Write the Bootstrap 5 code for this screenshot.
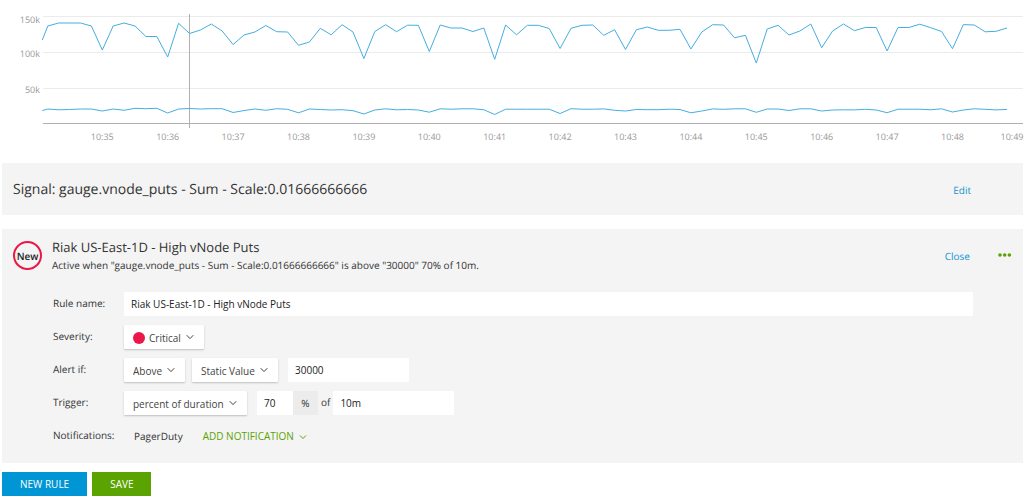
<!DOCTYPE html>
<html lang="en">
<head>
<meta charset="utf-8">
<meta name="viewport" content="width=device-width, initial-scale=1">
<title>Alert rule</title>
<link href="https://cdn.jsdelivr.net/npm/bootstrap@5.3.0/dist/css/bootstrap.min.css" rel="stylesheet">
<style>
  body { font-family: "Open Sans", "Noto Sans", sans-serif; font-size: 10px; line-height: 16px; color: #333; background: #fff; text-rendering: geometricPrecision; }
  .chart text { font-size: 9px; fill: #999; }
  .chart .grid-line { stroke: #ebebeb; }
  .chart .axis-line { stroke: #b0b0b0; }
  .chart .series { fill: none; stroke: #45aee0; stroke-width: 1; stroke-linejoin: round; }
  .page-body { padding: 0 1px 0 2px; }
  .panel { background: #f4f4f4; }
  .signal-panel { padding: 17px 52px 15px 11px; }
  .signal-title { font-size: 14px; line-height: 20px; }
  .rule-panel { margin-top: 14px; padding: 9px 11px 15px 11px; }
  .rule-title { font-size: 13px; line-height: 19px; }
  .state-circle { width: 29px; height: 29px; margin-right: 10px; border: 2px solid #eb1748; border-radius: 50%; font-weight: 600; color: #222; }
  .rule-form { padding: 19px 39px 0 40px; }
  .form-line { display: flex; align-items: center; min-height: 24px; margin-bottom: 9px; }
  .line-label { width: 71px; flex: none; padding-bottom: 2px; }
  .field { height: 24px; padding: 0 7px; border: 0; border-radius: 1px; background: #fff; color: #222; font-size: 10px; line-height: 16px; }
  .w-value { width: 121px; }
  .w-percent { width: 36px; }
  .gap-field { margin-left: 10px; }
  .gap-picker { margin-left: 7px; }
  .unit { height: 24px; width: 25px; background: #ececec; }
  .unit-join { padding: 0 3px 2px; }
  .picker { height: 24px; background: #fff; border-radius: 1px; box-shadow: 0 1px 2px rgba(0,0,0,.22); color: #444; }
  .picker select { appearance: none; width: 100%; height: 100%; border: 0; padding: 2px 20px 0 9px; color: inherit; font-size: 10px;
    background: url("data:image/svg+xml,%3Csvg xmlns='http://www.w3.org/2000/svg' width='8' height='6'%3E%3Cpath d='M.7 1.2L4 4.6 7.3 1.2' fill='none' stroke='%23444'/%3E%3C/svg%3E") no-repeat right 10px center; }
  .picker .dot { flex: none; width: 12px; height: 12px; margin: 2px 0 0 9px; border-radius: 50%; background: #eb1748; }
  .picker .dot + select { padding-left: 4px; }
  .w-severity { width: 80px; }
  .w-compare { width: 61px; }
  .w-kind { width: 86px; }
  .w-trigger { width: 123px; }
  .action { color: #1493cf; text-decoration: none; }
  .notify-name { padding: 0 20px 0 10px; }
  .add-btn { border: 0; padding: 0; background: none; color: #5ba300; }
  .add-btn svg { margin-left: 2px; }
  .menu-btn { border: 0; padding: 0; background: none; line-height: 0; margin-left: 26px; }
  .main-actions { margin-top: 9px; gap: 5px; }
  .main-btn { border: 0; height: 24px; padding: 0 18px; color: #fff; }
  .btn-blue { background: #0096d6; }
  .btn-green { background: #5ba300; }
</style>
</head>
<body>
<svg class="chart d-block w-100" viewBox="0 0 1024 163" role="img" aria-label="vnode puts over time">
  <g class="grid-line"><path d="M43 16.5H1023M43 52.5H1023M43 88.5H1023"/></g>
  <g text-anchor="end"><text x="40" y="23">150k</text><text x="40" y="57">100k</text><text x="40" y="93">50k</text></g>
  <g class="axis-line"><path d="M43 123.5H1023"/><path d="M189.5 14V128"/></g>
  <polyline class="series" id="upper"/>
  <polyline class="series" id="lower"/>
  <g id="times" text-anchor="middle"></g>
</svg>
<main class="page-body">
  <section class="panel signal-panel d-flex align-items-center justify-content-between">
    <h1 class="signal-title fw-normal m-0">Signal: gauge.vnode_puts - Sum - Scale:0.01666666666</h1>
    <a class="action" href="#">Edit</a>
  </section>
  <section class="panel rule-panel">
    <header class="d-flex align-items-center">
      <div class="state-circle d-flex align-items-center justify-content-center flex-shrink-0">New</div>
      <div class="flex-grow-1">
        <h2 class="rule-title fw-normal m-0">Riak US-East-1D - High vNode Puts</h2>
        <p class="m-0">Active when "gauge.vnode_puts - Sum - Scale:0.01666666666" is above "30000" 70% of 10m.</p>
      </div>
      <a class="action" href="#">Close</a>
      <button class="menu-btn" type="button" aria-label="More">
        <svg width="16" height="8" fill="#5ba300"><circle cx="4" cy="3" r="1.8"/><circle cx="8.7" cy="3" r="1.8"/><circle cx="13.4" cy="3" r="1.8"/></svg>
      </button>
    </header>
    <form class="rule-form">
      <div class="form-line">
        <label class="line-label" for="name">Rule name:</label>
        <input class="field flex-grow-1" id="name" type="text" value="Riak US-East-1D - High vNode Puts">
      </div>
      <div class="form-line">
        <label class="line-label" for="severity">Severity:</label>
        <div class="picker w-severity d-flex align-items-center"><span class="dot"></span>
          <select id="severity"><option>Critical</option><option>Major</option><option>Minor</option></select></div>
      </div>
      <div class="form-line">
        <label class="line-label" for="compare">Alert if:</label>
        <div class="picker w-compare"><select id="compare"><option>Above</option><option>Below</option></select></div>
        <div class="picker w-kind gap-picker"><select aria-label="Threshold type"><option>Static Value</option></select></div>
        <input class="field w-value gap-field" type="text" value="30000" aria-label="Threshold">
      </div>
      <div class="form-line">
        <label class="line-label" for="trigger">Trigger:</label>
        <div class="picker w-trigger"><select id="trigger"><option>percent of duration</option></select></div>
        <input class="field w-percent gap-field" type="text" value="70" aria-label="Percent">
        <span class="unit d-flex align-items-center justify-content-center">%</span>
        <label class="unit-join" for="duration">of</label>
        <input class="field w-value" id="duration" type="text" value="10m">
      </div>
      <div class="form-line mb-0">
        <span class="line-label">Notifications:</span>
        <span class="notify-name">PagerDuty</span>
        <button class="add-btn" type="button">ADD NOTIFICATION
          <svg width="8" height="6" fill="none" stroke="#5ba300"><path d="M1 1.5L4 4.5 7 1.5"/></svg></button>
      </div>
    </form>
  </section>
  <div class="main-actions d-flex">
    <button class="main-btn btn-blue" type="button">NEW RULE</button>
    <button class="main-btn btn-green" type="button">SAVE</button>
  </div>
</main>
<script>
  // One sample every ten seconds, as heights in the chart's own units.
  const upper = [26,23,23,23,26,50,26,23,26,36.5,36.5,57,23.3,33.5,30,24,31,44.5,35,32,25.5,31.7,32,45.3,42,28.3,34.8,24.7,32,58.5,31.5,24.7,31.7,25.2,25.3,51.5,25,28,28,31.5,28,59.3,25,34.8,25.3,25.3,28.5,48.5,28.3,25.3,25,35.3,29.7,49.5,29.7,27,30.3,30.3,29.3,49,32,24.7,25,37.8,35.3,63,29,25.3,35,31,24,47.7,31,24,30.7,27.5,27.5,51,27.5,27.5,24.2,27.7,31.5,48.7,24.6,25,31.8,31.3,28];
  const lower = [109,109.8,109.5,109,109,111,109,110.3,108.3,108.7,108.3,113,109,108.5,109,108.7,108.7,112.5,110.5,109,110.3,108.7,109.3,112.8,109,109.5,110,109.7,110.7,114,110,108.8,109.8,109.5,110,112.2,108.8,109.2,108.8,108.8,109.7,114.5,109.2,109.2,109.2,109.2,109.2,113.5,108.7,109.2,109.2,108.9,110.3,111,109.5,109.7,109.7,109.2,109.5,112.8,111,108.9,109.3,108.8,108.8,112.3,109,109,110.5,108.8,108.8,111,110,109.8,109.9,109.3,110,112.7,109.2,109.2,109.2,109.8,108.8,112,110,108.8,109.3,109.9,109.4];
  const at = i => 47.8 + i * 10.9;
  const draw = (id, first, ys) => document.getElementById(id).setAttribute("points",
    "42.3," + first + " " + ys.map((y, i) => at(i).toFixed(1) + "," + y).join(" "));
  draw("upper", 40, upper);
  draw("lower", 110.6, lower);
  const times = document.getElementById("times");
  for (let m = 35; m <= 49; m++) {
    const t = document.createElementNS("http://www.w3.org/2000/svg", "text");
    t.setAttribute("x", Math.min(at(5 + (m - 35) * 6), 1012));
    t.setAttribute("y", 140);
    t.textContent = "10:" + m;
    times.append(t);
  }
</script>
<script src="https://cdn.jsdelivr.net/npm/bootstrap@5.3.0/dist/js/bootstrap.bundle.min.js"></script>
</body>
</html>
